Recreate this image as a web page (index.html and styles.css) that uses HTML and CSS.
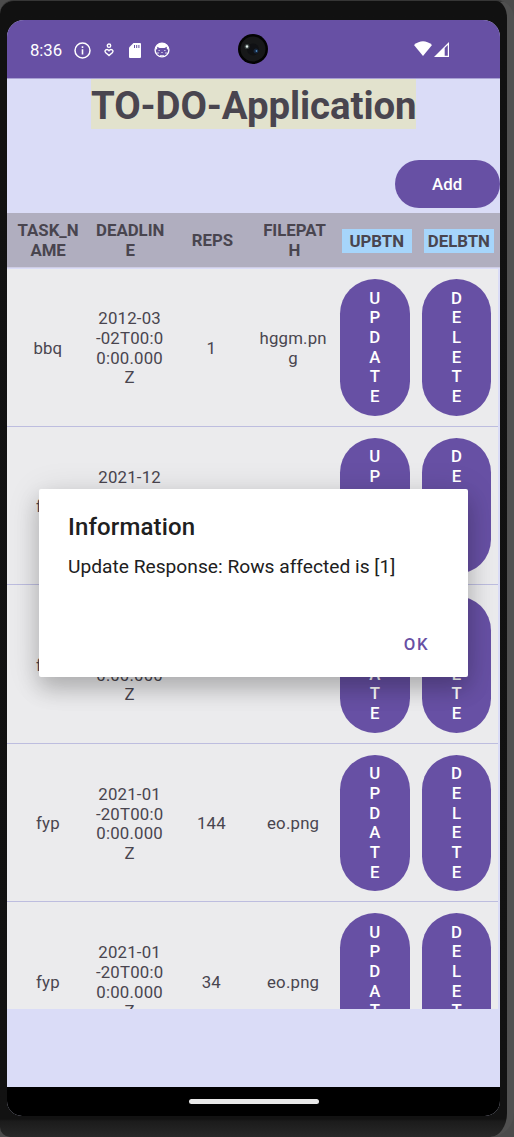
FILE: index.html
```html
<!DOCTYPE html>
<html lang="en">
<head>
<meta charset="utf-8">
<title>TO-DO-Application</title>
<link rel="stylesheet" href="styles.css">
</head>
<body>
<div class="phone">
  <div class="screen">
    <header class="status">
      <span class="clock">8:36</span>
      <svg class="ic-info" width="17" height="17" viewBox="0 0 17 17" fill="none" stroke="#fff"><circle cx="8.5" cy="8.5" r="7.5" stroke-width="1.5"/><path d="M8.5 7.3v5.2M8.5 4.3v1.7" stroke-width="1.6"/></svg>
      <svg class="ic-care" width="10" height="14" viewBox="0 0 10 14" fill="none" stroke="#fff" stroke-width="1.4"><circle cx="5" cy="2.7" r="1.7"/><path d="M5 12.6L1.500 9.400C-.2 7.400 3 5 5 7.700 7 5 10.200 7.400 8.500 9.400Z"/></svg>
      <svg class="ic-sd" width="12" height="15" viewBox="0 0 12 15"><path d="M4.500 0H11q1 0 1 1v13q0 1-1 1H1q-1 0-1-1V4.500Z" fill="#fff"/><path d="M5.500 2v3M7.700 2v3M9.900 2v3" stroke="#6750a4" stroke-width="1"/></svg>
      <svg class="ic-cat" width="16" height="16" viewBox="0 0 16 16"><circle cx="8" cy="8" r="6.900" fill="none" stroke="#fff" stroke-width="1.400"/><path d="M1.300 8Q2 1 8 1t6.700 7L12.800 7V4.800L10.500 6H5.500L3.200 4.800V7Z" fill="#fff"/><path d="M4.500 8.500h1.300M10.200 8.500h1.300M7.300 10.500h1.400M3 11h2M11 11h2M6 13.500h4" stroke="#fff" stroke-width="1" opacity=".75"/></svg>
      <svg class="ic-wifi" width="18" height="15" viewBox="0 0 18 15"><path d="M0 4Q9-3.500 18 4L9 15Z" fill="#fff"/></svg>
      <svg class="ic-cell" width="15" height="15" viewBox="0 0 15 15"><path d="M15 0V15H0Z" fill="#fff"/><path d="M10.700 6.100L13.800 3V13.700H10.700Z" fill="#6750a4"/></svg>
      <svg class="camera" width="30" height="30" viewBox="0 0 30 30"><circle cx="15" cy="15" r="15" fill="#030303"/><circle cx="15" cy="15" r="12.500" fill="#171819"/><circle cx="15" cy="15.500" r="6" fill="#101114"/><circle cx="9" cy="12.500" r="2.500" fill="#53615f" opacity=".65"/><circle cx="9" cy="12.500" r="1.200" fill="#e6f3f0"/><circle cx="18" cy="17" r="2.500" fill="#17263b"/><circle cx="18.500" cy="17" r=".9" fill="#4d88bd"/></svg>
    </header>
    <main class="app">
      <h1 class="title"><span>TO-DO-Application</span></h1>
      <div class="toolbar"><button class="btn add">Add</button></div>
      <div class="row head">
        <div>TASK_N<br>AME</div><div>DEADLIN<br>E</div><div>REPS</div><div>FILEPAT<br>H</div><div><span class="tag">UPBTN</span></div><div><span class="tag">DELBTN</span></div>
      </div>
      <div class="list">
        <div class="row item"><div>bbq</div><div>2012-03<br>-02T00:0<br>0:00.000<br>Z</div><div>1</div><div>hggm.pn<br>g</div><button class="btn tall">U<br>P<br>D<br>A<br>T<br>E</button><button class="btn tall">D<br>E<br>L<br>E<br>T<br>E</button></div>
        <div class="row item"><div>fyp</div><div>2021-12<br>-20T00:0<br>0:00.000<br>Z</div><div>1</div><div>eo.png</div><button class="btn tall">U<br>P<br>D<br>A<br>T<br>E</button><button class="btn tall">D<br>E<br>L<br>E<br>T<br>E</button></div>
        <div class="row item"><div>fyp</div><div>2021-01<br>-20T00:0<br>0:00.000<br>Z</div><div>1</div><div>eo.png</div><button class="btn tall">U<br>P<br>D<br>A<br>T<br>E</button><button class="btn tall">D<br>E<br>L<br>E<br>T<br>E</button></div>
        <div class="row item"><div>fyp</div><div>2021-01<br>-20T00:0<br>0:00.000<br>Z</div><div>144</div><div>eo.png</div><button class="btn tall">U<br>P<br>D<br>A<br>T<br>E</button><button class="btn tall">D<br>E<br>L<br>E<br>T<br>E</button></div>
        <div class="row item"><div>fyp</div><div>2021-01<br>-20T00:0<br>0:00.000<br>Z</div><div>34</div><div>eo.png</div><button class="btn tall">U<br>P<br>D<br>A<br>T<br>E</button><button class="btn tall">D<br>E<br>L<br>E<br>T<br>E</button></div>
      </div>
    </main>
    <footer class="nav"><div class="handle"></div></footer>
    <section class="dialog">
      <h2>Information</h2>
      <p>Update Response: Rows affected is [1]</p>
      <button class="ok">OK</button>
    </section>
  </div>
</div>
</body>
</html>
```
FILE: styles.css
```css
* { box-sizing: border-box; }
body { margin: 0; background: #4b4b4b; font-family: Roboto, "Liberation Sans", sans-serif; color: #49454f; }
button { font: inherit; border: 0; padding: 0; }
.phone {
  width: 514px; height: 1137px; padding: 19px 7px 21px 7px; overflow: hidden;
  border-right: 7px solid #505050; border-top: 1px solid #363636;
  border-radius: 14px 18px 24px 10px;
  background: linear-gradient(#111 0, #121212 1118px, #1b1b1b 1120px, #292929 1137px);
}
.screen {
  position: relative; width: 493px; height: 1096px; display: flex; flex-direction: column;
  border-radius: 17px 17px 15px 15px; overflow: hidden; background: #dadcf7;
}
.status { position: relative; height: 58px; flex: none; display: flex; align-items: center; background: #6750a4; padding: 2px 0 0 23px; }
.clock { color: #fff; font-size: 16.8px; width: 44px; letter-spacing: -.1px; }
.ic-care { margin-left: 13px; }
.ic-sd { margin-left: 15px; }
.ic-cat { margin-left: 13px; }
.ic-wifi { margin-left: 244px; margin-top: -3px; }
.ic-cell { margin-left: 2px; margin-top: -2px; }
.camera { position: absolute; left: 231px; top: 14px; }
.app { flex: 1; min-height: 0; border-top: 1px solid #a8a0d3; }
.title { margin: 0; height: 81px; text-align: center; font-size: 38.4px; font-weight: 700; letter-spacing: -.09px; white-space: nowrap; }
.title span { display: inline-block; background: #e2e2cd; width: 325px; height: 50px; line-height: 54px; }
.toolbar { display: flex; justify-content: flex-end; height: 53px; }
.btn { background: #6750a4; color: #fff; font-size: 16.8px; font-weight: 500; letter-spacing: .12px; }
.add { width: 105.5px; height: 48px; border-radius: 24px; }
.row { display: grid; grid-template-columns: repeat(6, 81.75px); align-items: center; text-align: center; font-size: 16.8px; line-height: 19.67px; letter-spacing: .2px; }
.head { grid-template-columns: repeat(6, 82.17px); height: 55px; padding-top: 1.5px; background: #b0aebf; border-bottom: 1px solid #cfcde4; font-weight: 700; letter-spacing: 0; }
.tag { display: inline-block; width: 70px; height: 24px; line-height: 25px; background: #a6d5fb; vertical-align: middle; }
.list { height: 741px; overflow: hidden; }
.item { width: 490.5px; height: 158.5px; border-bottom: 1px solid #bdbddf; background: #ebebed; padding-top: 1px; }
.item:first-child { box-shadow: inset 0 1px #dadcf7; }
.item > div { padding-top: 3px; }
.tall { justify-self: center; width: 69.7px; height: 136.5px; border-radius: 34.85px; line-height: 19.67px; padding-top: 1px; }
.nav { flex: none; height: 29px; background: #000; display: flex; justify-content: center; align-items: center; }
.handle { width: 130px; height: 5px; border-radius: 3px; background: #e8e8e8; }
.dialog {
  position: absolute; left: 32px; top: 469px; width: 429px; height: 188px; padding: 22px 29px 0;
  background: #fff; border-radius: 2px; color: #202020; display: flex; flex-direction: column;
  box-shadow: 0 12px 22px rgba(0,0,0,.2), 0 4px 34px rgba(0,0,0,.12);
}
.dialog h2 { margin: 0; font-size: 24px; line-height: 32px; font-weight: 500; letter-spacing: .15px; }
.dialog p { margin: 8px 0 0; font-size: 19.2px; line-height: 31px; white-space: nowrap; }
.ok { align-self: flex-end; margin: 50px 10px 0 0; background: none; color: #6750a4; font-size: 16.8px; font-weight: 500; letter-spacing: 1.5px; line-height: 24px; }
```
